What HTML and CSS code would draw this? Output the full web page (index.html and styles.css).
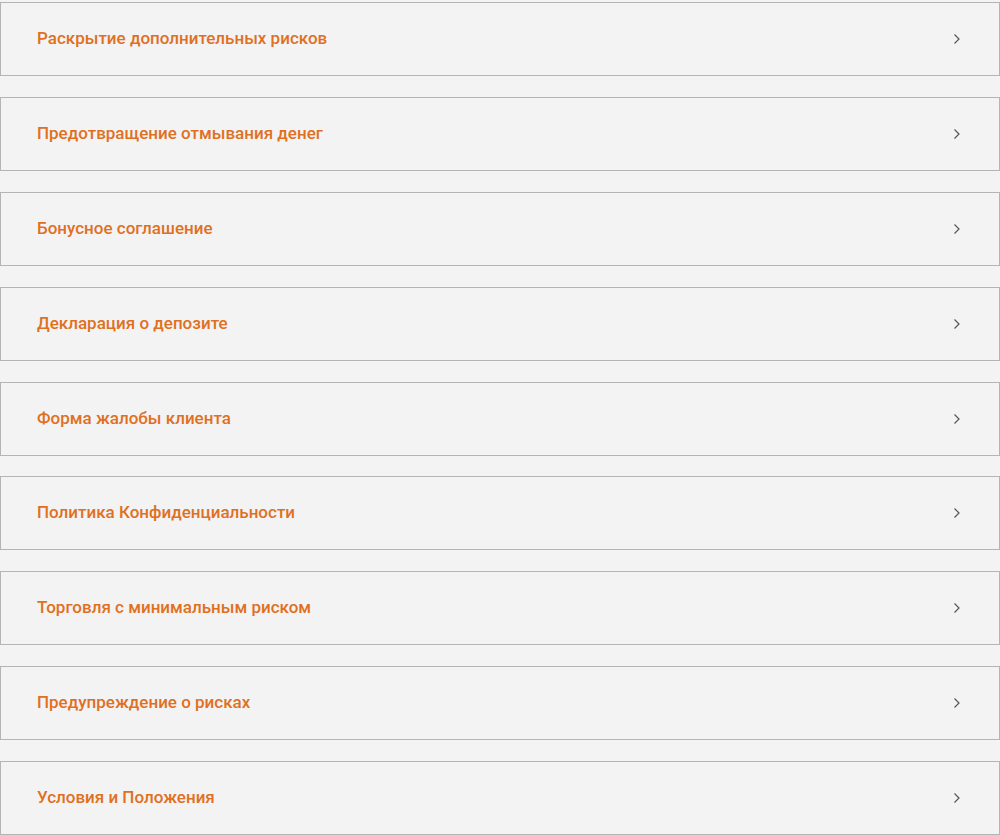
FILE: index.html
```html
<!DOCTYPE html>
<html lang="ru">
<head>
    <meta charset="UTF-8">
    <meta name="viewport" content="width=device-width, initial-scale=1.0">
    <title>Документы</title>
    <link rel="stylesheet" href="styles.css">
</head>
<body>
    <div class="doc-list">
        <a class="doc-item" href="#"><span class="doc-title">Раскрытие дополнительных рисков</span><svg class="chevron" viewBox="0 0 8 12"><path d="M1.5 1.5 L6 6 L1.5 10.5"/></svg></a>
        <a class="doc-item" href="#"><span class="doc-title">Предотвращение отмывания денег</span><svg class="chevron" viewBox="0 0 8 12"><path d="M1.5 1.5 L6 6 L1.5 10.5"/></svg></a>
        <a class="doc-item" href="#"><span class="doc-title">Бонусное соглашение</span><svg class="chevron" viewBox="0 0 8 12"><path d="M1.5 1.5 L6 6 L1.5 10.5"/></svg></a>
        <a class="doc-item" href="#"><span class="doc-title">Декларация о депозите</span><svg class="chevron" viewBox="0 0 8 12"><path d="M1.5 1.5 L6 6 L1.5 10.5"/></svg></a>
        <a class="doc-item" href="#"><span class="doc-title">Форма жалобы клиента</span><svg class="chevron" viewBox="0 0 8 12"><path d="M1.5 1.5 L6 6 L1.5 10.5"/></svg></a>
        <a class="doc-item" href="#"><span class="doc-title">Политика Конфиденциальности</span><svg class="chevron" viewBox="0 0 8 12"><path d="M1.5 1.5 L6 6 L1.5 10.5"/></svg></a>
        <a class="doc-item" href="#"><span class="doc-title">Торговля с минимальным риском</span><svg class="chevron" viewBox="0 0 8 12"><path d="M1.5 1.5 L6 6 L1.5 10.5"/></svg></a>
        <a class="doc-item" href="#"><span class="doc-title">Предупреждение о рисках</span><svg class="chevron" viewBox="0 0 8 12"><path d="M1.5 1.5 L6 6 L1.5 10.5"/></svg></a>
        <a class="doc-item" href="#"><span class="doc-title">Условия и Положения</span><svg class="chevron" viewBox="0 0 8 12"><path d="M1.5 1.5 L6 6 L1.5 10.5"/></svg></a>
    </div>
</body>
</html>
```

FILE: styles.css
```css
body {
    margin: 0;
    padding-top: 2px;
    background-color: #f3f3f3;
    font-family: Roboto, "Liberation Sans", sans-serif;
}
.doc-list {
    display: flex;
    flex-direction: column;
    gap: 20.875px;
}
.doc-item {
    display: flex;
    align-items: center;
    justify-content: space-between;
    box-sizing: border-box;
    height: 74px;
    padding: 0 38px 2px 36px;
    border: 1px solid #b4b4b4;
    background-color: #f3f3f3;
    text-decoration: none;
}
.doc-title {
    font-size: 17px;
    font-weight: 500;
    color: #e0701f;
}
.chevron {
    width: 8px;
    height: 12px;
    margin-top: 2px;
    fill: none;
    stroke: #555;
    stroke-width: 1.2;
}
```
